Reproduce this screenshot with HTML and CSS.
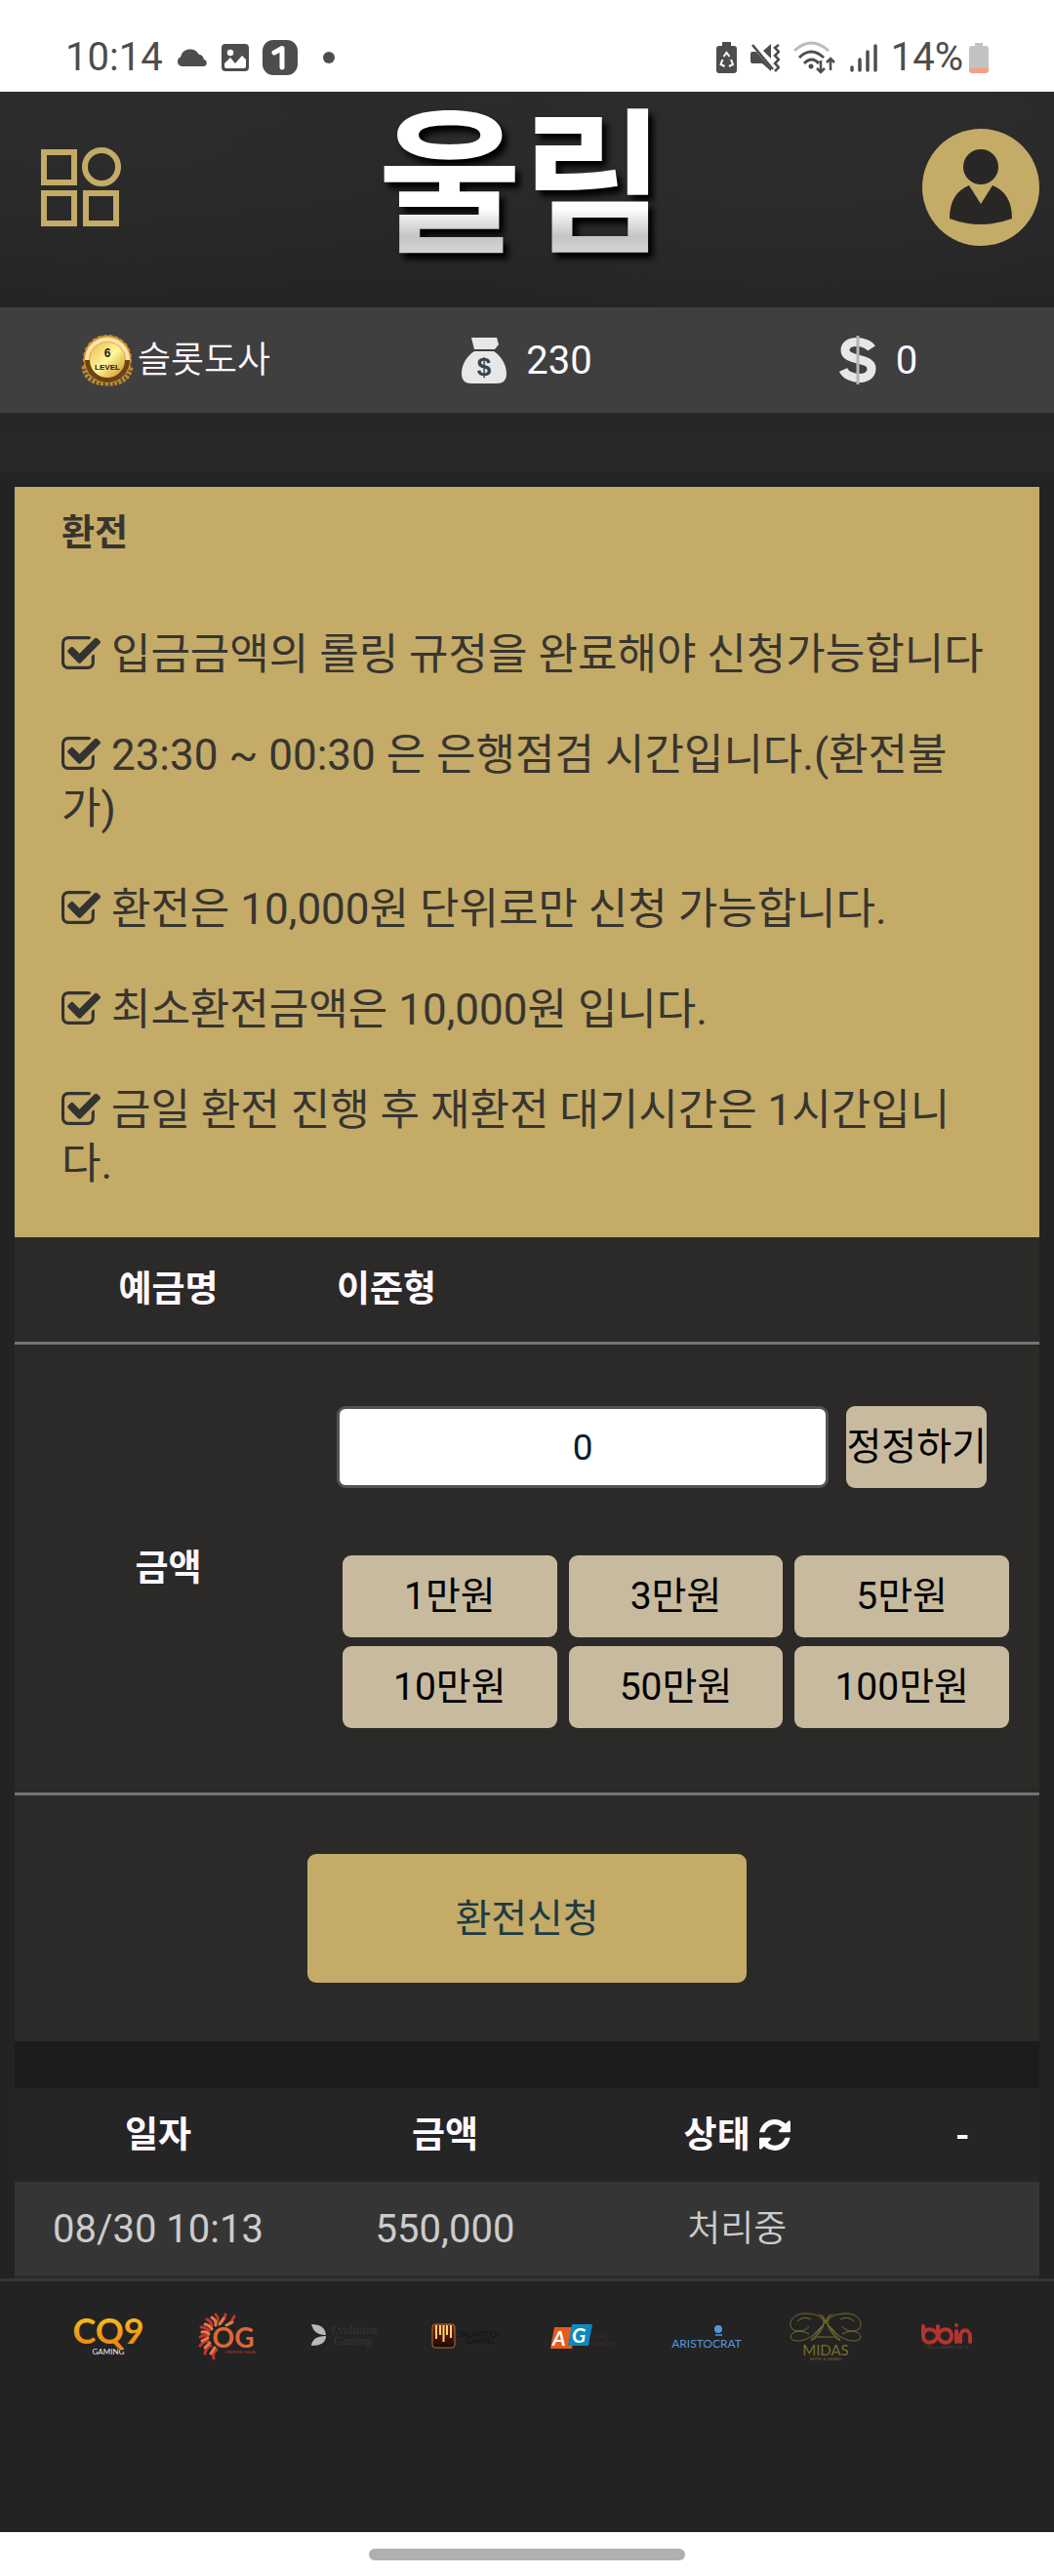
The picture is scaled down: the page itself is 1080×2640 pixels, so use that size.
FILE: index.html
```html
<!DOCTYPE html>
<html lang="ko">
<head>
    <meta charset="UTF-8">
    <meta name="viewport" content="width=device-width, initial-scale=1.0">
    <title>환전</title>
    <link rel="stylesheet" href="styles.css">
</head>
<body>
    <!-- icons used more than once -->
    <svg class="sprite" aria-hidden="true">
        <symbol id="check" viewBox="0 128 1664 1408">
            <path d="M1408 930v318q0 119-84.5 203.5t-203.5 84.5h-832q-119 0-203.5-84.5t-84.5-203.5v-832q0-119 84.5-203.5t203.5-84.5h832q63 0 117 25 15 7 18 23 3 17-9 29l-49 49q-10 10-23 10-3 0-9-2-23-6-45-6h-832q-66 0-113 47t-47 113v832q0 66 47 113t113 47h832q66 0 113-47t47-113v-254q0-13 9-22l64-64q10-10 23-10 6 0 12 3 20 8 20 29zm231-489l-814 814q-24 24-57 24t-57-24l-430-430q-24-24-24-57t24-57l110-110q24-24 57-24t57 24l263 263 647-647q24-24 57-24t57 24l110 110q24 24 24 57t-24 57z"/>
        </symbol>
    </svg>

    <div class="status-bar">
        <div class="status-group">
            <span>10:14</span>
            <svg width="32" height="20" viewBox="0 0 32 20"><path fill="#4d4d4d" d="M5 19a5 5 0 0 1-1-9.500A10 10 0 0 1 22.500 6.500 7 7 0 0 1 28 12a3.600 3.600 0 0 1 0 7z"/></svg>
            <svg width="28" height="28" viewBox="0 0 28 28"><rect width="28" height="28" rx="4" fill="#4d4d4d"/><circle cx="9" cy="9" r="3.200" fill="#fff"/><path fill="#fff" d="M3 20l6-6 5 6 7-8 4 4v7a2 2 0 0 1-2 2H5a2 2 0 0 1-2-2z"/></svg>
            <svg width="36" height="36" viewBox="0 0 36 36"><rect width="36" height="36" rx="11" fill="#4d4d4d"/><path fill="none" stroke="#fff" stroke-width="5" stroke-linecap="round" stroke-linejoin="round" d="M12 13l8-4.500V28"/></svg>
            <svg class="more-dot" width="12" height="12" viewBox="0 0 12 12"><circle cx="6" cy="6" r="6" fill="#4d4d4d"/></svg>
        </div>
        <div class="status-group">
            <svg width="21" height="32" viewBox="0 0 21 32"><path fill="#4d4d4d" d="M6 0h9v4h3a3 3 0 0 1 3 3v22a3 3 0 0 1-3 3H3a3 3 0 0 1-3-3V7a3 3 0 0 1 3-3h3z"/><path fill="none" stroke="#fff" stroke-width="2" d="M7.500 15l3-4 3 4M15 18l2 5-4 2M8.500 25l-4-2 2-5"/></svg>
            <svg width="30" height="30" viewBox="0 0 30 30"><path fill="#4d4d4d" d="M0 11q0-2 2-2h4l15 17v3l-9-8H2q-2 0-2-2zM13 8l8-7v15z"/><path fill="none" stroke="#4d4d4d" stroke-width="2.500" d="M2 2l21 25"/><path fill="none" stroke="#4d4d4d" stroke-width="2.500" d="M29 2l-4 3 4 4-4 4 4 4-4 4 4 4-4 4"/></svg>
            <svg width="44" height="34" viewBox="0 0 44 34"><g fill="none" stroke="#4d4d4d" stroke-width="3"><path stroke="#bbb" d="M1 10Q18-6 36 10"/><path d="M6 17q12-12 25 0M11 23q8-8 15 0"/><path stroke-width="2.500" d="M28 20v12M24 28l4 4 4-4M38 30V18M34 22l4-4 4 4"/></g><circle cx="18" cy="26" r="2.500" fill="#4d4d4d"/></svg>
            <svg width="28" height="30" viewBox="0 0 28 30"><path fill="none" stroke="#4d4d4d" stroke-width="3.500" stroke-linecap="round" d="M2 25v3M10 17v11M18 9v19M26 3v25"/></svg>
            <div class="battery">
                <span>14%</span>
                <svg width="20" height="31" viewBox="0 0 20 31"><path fill="#c2c2c2" d="M6 0h8v3h3a3 3 0 0 1 3 3v20H0V6a3 3 0 0 1 3-3h3z"/><path fill="#f79d80" d="M0 26h20v2a3 3 0 0 1-3 3H3a3 3 0 0 1-3-3z"/></svg>
            </div>
        </div>
    </div>

    <header class="site-header">
        <div class="top-bar">
            <button type="button" class="icon-btn" aria-label="메뉴">
                <svg width="82" height="82" viewBox="0 0 82 82"><g fill="none" stroke="#c4ab67" stroke-width="6"><path d="M3 5h31v31H3zM3 47h31v31H3zM46 47h31v31H46z"/><circle cx="62" cy="20" r="17"/></g></svg>
            </button>
            <a href="#" class="logo">울림</a>
            <button type="button" class="icon-btn" aria-label="내 정보">
                <svg width="120" height="120" viewBox="0 0 120 120"><circle cx="60" cy="60" r="60" fill="#c4ab67"/><g fill="#292726"><circle cx="60" cy="39" r="18"/><path d="M28 92c0-18 7-29 20-34l12 19 12-19c13 5 20 16 20 34q-32 12-64 0z"/></g></svg>
            </button>
        </div>
        <div class="user-info">
            <div class="info-item level">
                <svg width="54" height="54" viewBox="0 0 54 54">
                    <defs><linearGradient id="gold" x1="0" y1="0" x2="1" y2="1"><stop offset="0" stop-color="#e5bd4c"/><stop offset=".5" stop-color="#fff59b"/><stop offset="1" stop-color="#c98c1c"/></linearGradient></defs>
                    <path d="M3 33q1 18 24 18t24-18" fill="none" stroke="#b98a35" stroke-width="5" stroke-dasharray="3 1.500"/>
                    <circle cx="27" cy="26" r="24" fill="#e2a840" stroke="#c98f2e" stroke-width="2" stroke-dasharray="4 2"/>
                    <path d="M4 27a23 23 0 0 0 46 0z" fill="#6b4312"/>
                    <path d="M6 27a21 21 0 0 1 42 0" fill="none" stroke="#ffe3ad" stroke-width="4"/>
                    <circle cx="27" cy="27" r="18" fill="url(#gold)"/>
                    <text x="27" y="24" class="badge-num">6</text>
                    <text x="27" y="37" class="badge-label">LEVEL</text>
                </svg>
                <span>슬롯도사</span>
            </div>
            <div class="info-item">
                <svg width="46" height="48" viewBox="0 0 46 48"><path fill="#e6e8e8" d="M10 1h26l2 7-4 5H13zM13 15h20c8 5 13 14 13 23 0 7-4 10-10 10H10C4 48 0 45 0 38c0-9 5-18 13-23z"/><text x="23" y="40" class="bag-sign">$</text></svg>
                <span class="num">230</span>
            </div>
            <div class="info-item">
                <svg width="38" height="50" viewBox="0 0 38 50"><path fill="none" stroke="#e6e8e8" stroke-width="9" d="M33 13C28 5 6 3 6 15c0 12 27 6 27 19 0 13-24 12-29 1"/><path stroke="#b4b6b6" stroke-width="3" d="M19 0v50"/></svg>
                <span class="num">0</span>
            </div>
        </div>
    </header>

    <main class="content">
        <section class="notice">
            <h1>환전</h1>
            <p><svg class="check"><use href="#check"/></svg> 입금금액의 롤링 규정을 완료해야 신청가능합니다</p>
            <p><svg class="check"><use href="#check"/></svg> 23:30 ~ 00:30 은 은행점검 시간입니다.(환전불가)</p>
            <p><svg class="check"><use href="#check"/></svg> 환전은 10,000원 단위로만 신청 가능합니다.</p>
            <p><svg class="check"><use href="#check"/></svg> 최소환전금액은 10,000원 입니다.</p>
            <p><svg class="check"><use href="#check"/></svg> 금일 환전 진행 후 재환전 대기시간은 1시간입니다.</p>
        </section>

        <form class="exchange-form" id="exchangeForm">
            <div class="form-row">
                <span class="form-label">예금명</span>
                <strong class="account-name">이준형</strong>
            </div>
            <div class="form-row">
                <label class="form-label" for="amount">금액</label>
                <div class="form-fields">
                    <div class="amount-line">
                        <input type="text" id="amount" inputmode="numeric" value="0">
                        <button type="reset" class="btn">정정하기</button>
                    </div>
                    <div class="presets">
                        <button type="button" class="btn" data-amount="10000">1만원</button>
                        <button type="button" class="btn" data-amount="30000">3만원</button>
                        <button type="button" class="btn" data-amount="50000">5만원</button>
                        <button type="button" class="btn" data-amount="100000">10만원</button>
                        <button type="button" class="btn" data-amount="500000">50만원</button>
                        <button type="button" class="btn" data-amount="1000000">100만원</button>
                    </div>
                </div>
            </div>
            <div class="form-submit">
                <button type="submit" class="btn-submit">환전신청</button>
            </div>
        </form>

        <table class="history">
            <thead>
                <tr>
                    <th class="col-date">일자</th>
                    <th class="col-amount">금액</th>
                    <th class="col-state">상태 <svg class="refresh" viewBox="0 128 1536 1536"><path d="M1511 1056q0 5-1 7-64 268-268 434.500t-478 166.500q-146 0-282.500-55t-243.500-157l-129 129q-19 19-45 19t-45-19-19-45v-448q0-26 19-45t45-19h448q26 0 45 19t19 45-19 45l-137 137q71 66 161 102t187 36q134 0 250-65t186-179q11-17 53-117 8-23 30-23h192q13 0 22.500 9.500t9.500 22.500zm25-800v448q0 26-19 45t-45 19h-448q-26 0-45-19t-19-45 19-45l138-138q-148-137-349-137-134 0-250 65t-186 179q-11 17-53 117-8 23-30 23h-199q-13 0-22.500-9.500t-9.500-22.500v-7q65-268 270-434.500t480-166.500q146 0 284 55.500t245 156.500l130-129q19-19 45-19t45 19 19 45z"/></svg></th>
                    <th>-</th>
                </tr>
            </thead>
            <tbody>
                <tr>
                    <td class="num">08/30 10:13</td>
                    <td class="num">550,000</td>
                    <td>처리중</td>
                    <td></td>
                </tr>
            </tbody>
        </table>
    </main>

    <footer class="partners">
        <svg viewBox="0 0 74 50">
            <defs><linearGradient id="cq" x1="0" y1="0" x2="0" y2="1"><stop offset="0" stop-color="#f6cf1c"/><stop offset="1" stop-color="#ea7a12"/></linearGradient></defs>
            <text x="37" y="32" class="cq9" fill="url(#cq)">CQ9</text>
            <text x="37" y="43" class="cq9-sub">GAMING</text>
        </svg>
        <svg viewBox="0 0 74 50">
            <g fill="none" stroke-width="3" stroke-linecap="round">
                <path stroke="#c93036" d="M24 2q4 4 1 8M34 2q-1 5-4 8M43 4q-2 5-6 8M15 7q5 2 5 7M9 15q5 0 8 4M8 25q5-3 8-1M8 34q4-5 8-5M13 42q1-6 6-8M22 47q-2-5 3-9"/>
                <path stroke="#dd8040" d="M20 5q5 3 4 8M32 6l-4 6M41 10l-6 3M13 12q5 1 7 5M10 20q5-1 7 2M10 29l6-3M13 36l5-5M19 42l4-6"/>
            </g>
            <text x="42" y="36" class="og">OG</text>
            <text x="49" y="42" class="og-sub">ORIENTAL GAME</text>
        </svg>
        <svg viewBox="0 0 74 50">
            <path fill="#b9b9b9" d="M0 12q14 0 15 11Q3 24 0 12zM0 34q1-10 15-10 0 10-15 10z"/>
            <text x="20" y="22" class="evo">Evolution</text>
            <text x="23" y="33" class="evo">Gaming</text>
        </svg>
        <svg viewBox="0 0 74 50">
            <defs><linearGradient id="dt" x1="0" y1="0" x2="0" y2="1"><stop offset="0" stop-color="#7d2413"/><stop offset="1" stop-color="#1a0904"/></linearGradient></defs>
            <rect x="1" y="12" width="23" height="24" rx="3" fill="url(#dt)" stroke="#a97436"/>
            <path stroke="#ffd36e" stroke-width="2" d="M5 13v14M9 13v10M12.500 13v17M16 13v10M20 13v13"/>
            <text x="27" y="25" class="dream">DREAMTECH</text>
            <text x="36" y="32" class="dream">GAMING</text>
        </svg>
        <svg viewBox="0 0 74 50">
            <path fill="#e45a20" d="M4 15h22l-4 22H0z"/>
            <path fill="#0b8abb" d="M22 12h21l-4 22H18z"/>
            <text x="2" y="34" class="ag">A</text>
            <text x="22" y="31" class="ag">G</text>
            <text x="42" y="26" class="ag-sub">Asia</text>
            <text x="41" y="34" class="ag-sub">Gaming</text>
        </svg>
        <svg viewBox="0 0 74 50">
            <circle cx="49" cy="17" r="4" fill="#5596dc"/>
            <path stroke="#5596dc" stroke-width="1.500" d="M46 23h7"/>
            <text x="37" y="36" class="aristo">ARISTOCRAT</text>
        </svg>
        <svg viewBox="0 0 74 50">
            <g fill="none" stroke="#766d29" stroke-width="1">
                <path d="M22 29C42 14 38 1 16 1 2 1-2 12 3 17c6 5 16 0 17-3M52 29C32 14 36 1 58 1c14 0 18 11 13 16-6 5-16 0-17-3M22 28L44 1M52 28L30 1M25 28L41 2M49 28L33 2M26 25h22M20 22C10 16 2 20 1 25c1 6 14 5 22-1L39 8M54 22c10-6 18-2 19 3-1 6-14 5-22-1L35 8M8 9q6-6 14-2M66 9q-6-6-14-2"/>
            </g>
            <text x="37" y="44" class="midas">MIDAS</text>
            <text x="37" y="49" class="midas-sub">HOTEL &amp; CASINO</text>
        </svg>
        <svg viewBox="0 0 74 50">
            <g fill="none" stroke="#b6332e" stroke-width="4" stroke-linecap="round">
                <path d="M14 14v10c0 9 12 9 15 0s14-9 14 0-11 9-14 0-15-9-15 0M29 14v8M48 19v11M52 30v-5c0-9 10-9 10 0v5"/>
            </g>
            <circle cx="48" cy="13" r="2" fill="#b6332e"/>
            <text x="38" y="37" class="bbin-sub">THE GAMING BEAT</text>
        </svg>
    </footer>

    <div class="nav-bar"><span></span></div>

    <script>
        // quick amount buttons add to the current value
        const amount = document.getElementById('amount');

        document.querySelectorAll('.presets .btn').forEach(btn => {
            btn.addEventListener('click', () => {
                const current = Number(amount.value.replace(/,/g, '')) || 0;
                amount.value = (current + Number(btn.dataset.amount)).toLocaleString();
            });
        });

        document.getElementById('exchangeForm').addEventListener('submit', (e) => {
            e.preventDefault();
        });
    </script>
</body>
</html>
```

FILE: styles.css
```css
:root {
    --gold: #c4ab67;
    --gold-soft: #c7ba9f;
    --background: #232323;
    --panel: #2b2a28;
    --line: #737373;
    --text: #fff8ff;
    --radius: 9px;
}

* {
    margin: 0;
    padding: 0;
    box-sizing: border-box;
}

body {
    display: flex;
    flex-direction: column;
    min-height: 100vh;
    font-family: Roboto, 'Noto Sans CJK KR', sans-serif;
    font-size: 37px;
    font-weight: 350;
    line-height: 55px;
    color: var(--text);
    background-color: var(--background);
}

button,
input {
    font: inherit;
}

button {
    border: none;
    cursor: pointer;
}

.sprite {
    display: none;
}

.num {
    font-size: 40px;
    font-weight: 400;
}

/* Status bar */
.status-bar {
    display: flex;
    justify-content: space-between;
    align-items: center;
    height: 94px;
    padding: 24px 67px 0;
    font-size: 40px;
    font-weight: 400;
    line-height: 44px;
    color: #4d4d4d;
    background-color: white;
}

.status-group {
    display: flex;
    align-items: center;
    gap: 14px;
}

.more-dot {
    margin-left: 12px;
}

.battery {
    display: flex;
    align-items: center;
    gap: 6px;
}

/* Header */
.site-header {
    padding-bottom: 61px;
    background:
        radial-gradient(ellipse at 75% 15%, #2d2d2d, transparent 40%),
        radial-gradient(ellipse at 10% 10%, #2c2c2c, transparent 35%),
        linear-gradient(#2a2a2a, #252424 60%, #292828);
}

.top-bar {
    display: flex;
    justify-content: space-between;
    align-items: center;
    height: 221px;
    padding: 0 15px 26px 42px;
}

.icon-btn {
    display: flex;
    background: none;
}

.logo {
    font-size: 160px;
    font-weight: 700;
    line-height: 180px;
    text-decoration: none;
    color: transparent;
    background: linear-gradient(#fff 62%, #c4c4c4 78%, #eee);
    background-clip: text;
    -webkit-background-clip: text;
    filter: drop-shadow(5px 6px 3px #000);
}

.user-info {
    display: flex;
    height: 108px;
    background-color: #3f3f3f;
}

.info-item {
    flex: 1;
    display: flex;
    justify-content: center;
    align-items: center;
    gap: 20px;
}

.info-item.level {
    gap: 4px;
}

.badge-num,
.badge-label,
.bag-sign {
    font-family: 'Liberation Sans', sans-serif;
    font-weight: 700;
    text-anchor: middle;
    fill: #222;
}

.badge-num {
    font-size: 12px;
}

.badge-label {
    font-size: 8px;
}

.bag-sign {
    font-size: 26px;
    fill: #3f3f3f;
}

.content {
    padding: 15px 15px 0;
}

/* Notice */
.notice {
    padding: 20px 52px 47px 48px;
    color: #383530;
    background-color: var(--gold);
}

.notice h1 {
    margin-bottom: 70px;
    font-size: 37px;
    font-weight: 700;
}

.notice p {
    font-size: 44px;
    font-weight: 400;
}

.notice p + p {
    margin-top: 48px;
}

.check {
    width: 40px;
    height: 34px;
    fill: #333;
}

/* Exchange form */
.exchange-form {
    background-color: var(--panel);
}

.form-row {
    display: flex;
    align-items: center;
    min-height: 110px;
    border-bottom: 3px solid var(--line);
}

.form-label {
    width: 30%;
    font-weight: 700;
    text-align: center;
}

.account-name {
    padding-left: 15px;
    font-weight: 700;
}

.form-fields {
    flex: 1;
    padding: 63px 31px 66px 15px;
}

.amount-line {
    display: flex;
    align-items: center;
    gap: 18px;
    margin-bottom: 69px;
    padding-right: 23px;
}

.amount-line input {
    flex: 1;
    min-width: 0;
    height: 84px;
    border: 3px solid #52525c;
    border-radius: var(--radius);
    font-weight: 400;
    text-align: center;
    color: #0b1e2b;
    background-color: white;
}

.btn {
    height: 84px;
    border-radius: var(--radius);
    font-size: 39px;
    font-weight: 400;
    white-space: nowrap;
    color: black;
    background-color: var(--gold-soft);
}

.presets {
    display: grid;
    grid-template-columns: repeat(3, 1fr);
    gap: 9px 12px;
    margin-left: 6px;
}

.form-submit {
    display: flex;
    justify-content: center;
    padding: 60px 0;
}

.btn-submit {
    width: 450px;
    height: 132px;
    border-radius: var(--radius);
    font-size: 40px;
    font-weight: 400;
    color: #1d3c44;
    background-color: var(--gold);
}

/* History */
.history {
    width: 100%;
    table-layout: fixed;
    border-collapse: separate;
    border-spacing: 0;
    border-top: 48px solid #1c1c1c;
    border-bottom: 3px solid #2a2a2a;
    text-align: center;
}

.history tr {
    height: 96px;
}

.history th {
    font-weight: 700;
    background-color: #252525;
}

.history td {
    color: #ccc;
    background-color: #353535;
}

.col-date,
.col-amount {
    width: 28%;
}

.col-state {
    width: 29%;
}

.refresh {
    width: 32px;
    height: 32px;
    vertical-align: -3px;
    fill: var(--text);
}

/* Partners */
.partners {
    flex: 1;
    display: flex;
    justify-content: space-around;
    align-items: flex-start;
    padding: 32px 50px;
    border-top: 3px solid #363636;
}

.partners svg {
    width: 74px;
    height: 50px;
    overflow: visible;
}

.partners text {
    font-family: Lato, sans-serif;
    font-weight: 400;
}

.partners .cq9 {
    font-size: 36px;
    font-weight: 700;
    text-anchor: middle;
}

.partners .cq9-sub {
    font-size: 8px;
    text-anchor: middle;
    fill: #eee;
}

.partners .og {
    font-size: 28px;
    font-weight: 700;
    text-anchor: middle;
    fill: #df6835;
}

.partners .og-sub {
    font-size: 4px;
    text-anchor: middle;
    fill: #c93036;
}

.partners .evo {
    font-family: 'Liberation Serif', serif;
    font-size: 12px;
    fill: #383636;
}

.partners .dream {
    font-size: 7px;
    fill: #101010;
}

.partners .ag {
    font-size: 21px;
    font-style: italic;
    font-weight: 700;
    fill: #fff;
}

.partners .ag-sub {
    font-size: 8px;
    font-style: italic;
    fill: #3b2b27;
}

.partners .aristo {
    font-size: 12px;
    text-anchor: middle;
    fill: #5596dc;
}

.partners .midas {
    font-size: 15px;
    text-anchor: middle;
    fill: #766d29;
}

.partners .midas-sub {
    font-size: 4px;
    text-anchor: middle;
    fill: #766d29;
}

.partners .bbin-sub {
    font-family: 'Liberation Serif', serif;
    font-size: 5px;
    text-anchor: middle;
    fill: #4a4a4a;
}

/* Gesture bar */
.nav-bar {
    display: flex;
    justify-content: center;
    padding: 17px 0 16px;
    background-color: white;
}

.nav-bar span {
    width: 30%;
    height: 12px;
    border-radius: 6px;
    background-color: #b0b0b0;
}
```
